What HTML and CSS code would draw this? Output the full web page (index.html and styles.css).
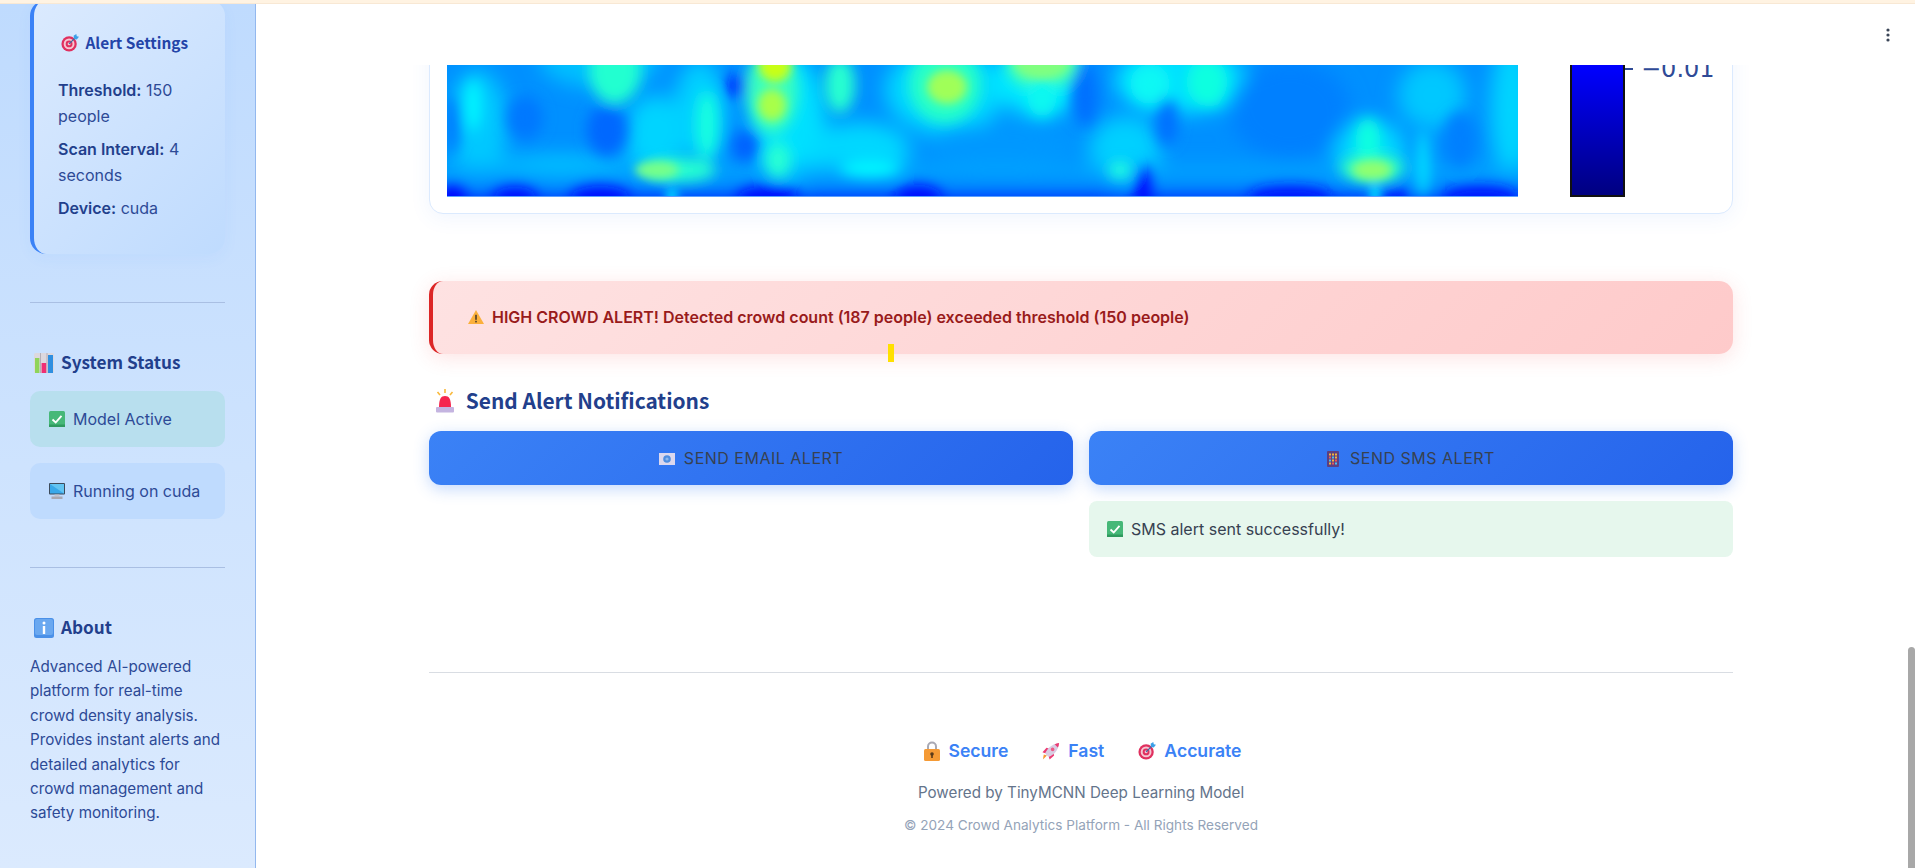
FILE: index.html
```html
<!DOCTYPE html>
<html lang="en">
<head>
  <meta charset="UTF-8" />
  <title>Crowd Analytics Platform</title>
  <link rel="stylesheet" href="styles.css">
</head>
<body>
  <svg class="defs" width="0" height="0">
    <defs>
      <symbol id="i-target" viewBox="0 0 20 20">
        <circle cx="9" cy="11" r="8.5" fill="#e0305f"/>
        <circle cx="9" cy="11" r="6" fill="#f6c6d2"/>
        <circle cx="9" cy="11" r="3.8" fill="#e0305f"/>
        <circle cx="9" cy="11" r="1.6" fill="#f6c6d2"/>
        <path d="M9 11 L16 4" stroke="#3a6ea5" stroke-width="1.4"/>
        <path d="M14 2 L17 0 L17.5 2.5 L20 3 L17.5 6 L14.5 5.5 Z" fill="#3aa0e8"/>
      </symbol>
      <symbol id="i-chart" viewBox="0 0 20 20">
        <rect x="0" y="0" width="20" height="20" rx="1.5" fill="#dcd8de"/>
        <path d="M6.5 0V20M13 0V20" stroke="#aaa5ae" stroke-width=".8"/>
        <rect x="1" y="5" width="4.4" height="15" fill="#8fd45a"/>
        <rect x="7.6" y="10" width="4.6" height="10" fill="#ef2f74"/>
        <rect x="14" y="2" width="5" height="18" fill="#2f8fe0"/>
      </symbol>
      <symbol id="i-check" viewBox="0 0 16 16">
        <rect x="0" y="0" width="16" height="16" rx="1.5" fill="#46b878"/>
        <rect x="0" y="13.5" width="16" height="2.5" fill="#2f9a5e"/>
        <path d="M3.5 8.5 L6.7 11.5 L12.5 4.8" fill="none" stroke="#fff" stroke-width="1.9"/>
      </symbol>
      <symbol id="i-monitor" viewBox="0 0 16 16">
        <rect x="0" y="0" width="16" height="11.5" rx="1" fill="#3c4a5a"/>
        <path d="M1 1H15V10.5H1Z" fill="#38a8ea"/>
        <path d="M1 1H15V10.5Z" fill="#62c4f2"/>
        <rect x="5.5" y="11.5" width="5" height="2" fill="#c4c4cc"/>
        <rect x="2.5" y="13.5" width="11" height="2.5" fill="#a8a8b2"/>
      </symbol>
      <symbol id="i-info" viewBox="0 0 20 20">
        <rect x="0" y="0" width="20" height="20" rx="2.5" fill="#4a90e8"/>
        <rect x="1" y="1" width="18" height="16" rx="2" fill="#6aa8f0"/>
        <circle cx="10" cy="5" r="1.5" fill="#fff"/>
        <rect x="8.8" y="8" width="2.4" height="8" fill="#fff"/>
      </symbol>
      <symbol id="i-warn" viewBox="0 0 16 14">
        <path d="M8 0 L16 14 H0 Z" fill="#fbb03b"/>
        <rect x="7.2" y="4.8" width="1.6" height="5" fill="#4a3a2a"/>
        <rect x="7.2" y="10.8" width="1.6" height="1.6" fill="#4a3a2a"/>
      </symbol>
      <symbol id="i-siren" viewBox="0 0 20 24">
        <path d="M4 18 C4 10 6 7 10 7 C14 7 16 10 16 18 Z" fill="#f5264f"/>
        <rect x="1" y="18" width="18" height="5.5" rx="1" fill="#c4b4e0"/>
        <path d="M10 0V4M2.5 3 L5 6M17.5 3 L15 6" stroke="#f9b93c" stroke-width="1.6"/>
      </symbol>
      <symbol id="i-mail" viewBox="0 0 16 12">
        <rect x="0" y="0" width="16" height="12" fill="#dcd8ee"/>
        <circle cx="8" cy="6" r="3.8" fill="#4f8ee0"/>
        <circle cx="8" cy="6" r="1.6" fill="#8db8ee"/>
      </symbol>
      <symbol id="i-phone" viewBox="0 0 12 16">
        <rect x="0" y="0" width="12" height="16" rx="1" fill="#5c3f80"/>
        <rect x="2" y="2.5" width="2" height="2" fill="#f2b63c"/>
        <rect x="5" y="2.5" width="2" height="2" fill="#f2b63c"/>
        <rect x="8" y="2.5" width="2" height="2" fill="#f2b63c"/>
        <rect x="2" y="5.5" width="2" height="2" fill="#e85a5a"/>
        <rect x="5" y="5.5" width="2" height="2" fill="#4fc0e8"/>
        <rect x="8" y="5.5" width="2" height="2" fill="#f2b63c"/>
        <rect x="2" y="8.5" width="2" height="2" fill="#4fc0e8"/>
        <rect x="5" y="8.5" width="2" height="2" fill="#f2b63c"/>
        <rect x="8" y="8.5" width="2" height="2" fill="#e85a5a"/>
        <rect x="2" y="11.5" width="2" height="2" fill="#f2b63c"/>
        <rect x="5" y="11.5" width="2" height="2" fill="#e85a5a"/>
        <rect x="8" y="11.5" width="2" height="2" fill="#4fc0e8"/>
      </symbol>
      <symbol id="i-lock" viewBox="0 0 16 20">
        <path d="M4 9V5.5a4 4 0 0 1 8 0V9" fill="none" stroke="#a9a9b4" stroke-width="2"/>
        <rect x="0" y="8" width="16" height="12" rx="1.5" fill="#f59a35"/>
        <circle cx="8" cy="13" r="1.8" fill="#5a3a1a"/>
        <rect x="7.2" y="13" width="1.6" height="4" fill="#5a3a1a"/>
      </symbol>
      <symbol id="i-rocket" viewBox="0 0 20 20">
        <path d="M5.5 15 L1 19.5 L2 14 Z" fill="#f59a35"/>
        <path d="M3.5 12.5 L0.5 11.5 L5 6.5 L9 7.5 Z" fill="#ec3a72"/>
        <path d="M7.5 16.5 L8.5 19.5 L13.5 15 L12.5 11 Z" fill="#ec3a72"/>
        <path d="M3.5 13 C5.5 7 11 2 19 1 C18.5 9 13 14.5 7 16.5 Z" fill="#d9cce2"/>
        <path d="M14 2.6 C15.5 1.8 17 1.2 19 1 C18.9 3 18.4 4.6 17.6 6 Z" fill="#ec3a72"/>
        <circle cx="11.8" cy="8.2" r="2" fill="#ec5a86"/>
      </symbol>
      <filter id="wide" x="-5%" y="-30%" width="110%" height="160%">
        <feGaussianBlur stdDeviation="10"/>
      </filter>
      <filter id="mid" x="-5%" y="-30%" width="110%" height="160%">
        <feGaussianBlur stdDeviation="7"/>
      </filter>
      <filter id="tight" x="-5%" y="-30%" width="110%" height="160%">
        <feGaussianBlur stdDeviation="5"/>
      </filter>
    </defs>
  </svg>

  <div class="strip"></div>

  <div class="app">
    <aside class="sidebar">
      <div class="settings">
        <h4><svg class="ico ico-18"><use href="#i-target"/></svg> Alert Settings</h4>
        <p><strong>Threshold:</strong> 150 people</p>
        <p><strong>Scan Interval:</strong> 4 seconds</p>
        <p><strong>Device:</strong> cuda</p>
      </div>

      <hr class="rule rule-first">

      <h3 class="side-title"><svg class="ico ico-20"><use href="#i-chart"/></svg> System Status</h3>
      <div class="status status-ok"><svg class="ico ico-16"><use href="#i-check"/></svg> Model Active</div>
      <div class="status status-info"><svg class="ico ico-16"><use href="#i-monitor"/></svg> Running on cuda</div>

      <hr class="rule rule-second">

      <h3 class="side-title about-title"><svg class="ico ico-20"><use href="#i-info"/></svg> About</h3>
      <p class="about">Advanced AI-powered platform for real-time crowd density analysis. Provides instant alerts and detailed analytics for crowd management and safety monitoring.</p>
    </aside>

    <main class="main">
      <div class="topbar">
        <svg class="dots" width="4" height="14" viewBox="0 0 4 14">
          <circle cx="2" cy="2" r="1.6"/><circle cx="2" cy="7" r="1.6"/><circle cx="2" cy="12" r="1.6"/>
        </svg>
      </div>

      <div class="content">
        <section class="plot-card">
          <div class="plot">
            <svg class="heatmap" width="1071" height="132" viewBox="447 65 1071 132">
              <rect x="447" y="65" width="1071" height="132" fill="#0090ff"/>
              <!-- broad cyan ground and the bottom band -->
              <g filter="url(#wide)">
                <ellipse cx="478" cy="125" rx="30" ry="55" fill="#00c8ff"/>
                <ellipse cx="560" cy="168" rx="70" ry="12" fill="#00d4ff"/>
                <ellipse cx="600" cy="60" rx="60" ry="28" fill="#00c0ff"/>
                <ellipse cx="655" cy="135" rx="30" ry="40" fill="#00d4ff"/>
                <ellipse cx="700" cy="110" rx="26" ry="50" fill="#00d0ff"/>
                <ellipse cx="790" cy="120" rx="36" ry="65" fill="#00e0ff"/>
                <ellipse cx="860" cy="150" rx="50" ry="28" fill="#00d8ff"/>
                <ellipse cx="945" cy="90" rx="60" ry="44" fill="#00d8ff"/>
                <ellipse cx="1040" cy="80" rx="46" ry="36" fill="#00e8ff"/>
                <ellipse cx="1125" cy="150" rx="36" ry="34" fill="#00d0ff"/>
                <ellipse cx="1180" cy="80" rx="66" ry="34" fill="#00e0ff"/>
                <ellipse cx="1432" cy="95" rx="34" ry="34" fill="#00c8ff"/>
                <ellipse cx="1512" cy="110" rx="22" ry="70" fill="#00d4ff"/>
                <ellipse cx="1370" cy="150" rx="36" ry="30" fill="#00d8ff"/>
                <ellipse cx="1000" cy="145" rx="80" ry="22" fill="#0098ff"/>
                <ellipse cx="1290" cy="110" rx="60" ry="50" fill="#0080ff"/>
                <rect x="420" y="166" width="1130" height="12" fill="#00a8ff"/>
                <rect x="420" y="192" width="1130" height="40" fill="#0030ff"/>
              </g>
              <!-- darker pockets and green ridges -->
              <g filter="url(#mid)">
                <ellipse cx="525" cy="118" rx="18" ry="22" fill="#0078ff"/>
                <ellipse cx="607" cy="130" rx="20" ry="26" fill="#0068ff"/>
                <ellipse cx="452" cy="125" rx="8" ry="30" fill="#0078ff"/>
                <ellipse cx="1085" cy="92" rx="14" ry="34" fill="#0070ff"/>
                <ellipse cx="1167" cy="122" rx="11" ry="24" fill="#0070ff"/>
                <ellipse cx="1460" cy="140" rx="16" ry="28" fill="#0080ff"/>
                <ellipse cx="738" cy="86" rx="10" ry="12" fill="#0010ff"/>
                <ellipse cx="745" cy="146" rx="13" ry="16" fill="#0060ff"/>
                <ellipse cx="452" cy="198" rx="14" ry="12" fill="#0000ff"/>
                <ellipse cx="515" cy="198" rx="22" ry="11" fill="#0010ff"/>
                <ellipse cx="600" cy="198" rx="30" ry="12" fill="#0010ff"/>
                <ellipse cx="768" cy="198" rx="32" ry="12" fill="#0008ff"/>
                <ellipse cx="918" cy="198" rx="24" ry="13" fill="#0010ff"/>
                <ellipse cx="1143" cy="190" rx="8" ry="24" fill="#0000ff"/>
                <ellipse cx="1290" cy="198" rx="42" ry="12" fill="#0018ff"/>
                <ellipse cx="1395" cy="198" rx="14" ry="10" fill="#0020ff"/>
                <ellipse cx="1480" cy="198" rx="38" ry="12" fill="#0018ff"/>
                <ellipse cx="615" cy="70" rx="26" ry="34" fill="#20ffd0"/>
                <ellipse cx="707" cy="125" rx="11" ry="34" fill="#18ffe0"/>
                <ellipse cx="772" cy="90" rx="26" ry="44" fill="#38ffc0"/>
                <ellipse cx="778" cy="160" rx="13" ry="18" fill="#28ffd4"/>
                <ellipse cx="473" cy="105" rx="8" ry="26" fill="#00f8ff"/>
                <ellipse cx="840" cy="85" rx="15" ry="28" fill="#28ffd0"/>
                <ellipse cx="945" cy="85" rx="36" ry="38" fill="#28ffc8"/>
                <ellipse cx="1042" cy="64" rx="36" ry="26" fill="#40ffb8"/>
                <ellipse cx="1042" cy="95" rx="15" ry="22" fill="#08f8f0"/>
                <ellipse cx="1207" cy="82" rx="20" ry="24" fill="#10ffe0"/>
                <ellipse cx="1150" cy="84" rx="20" ry="20" fill="#08f8f4"/>
                <ellipse cx="1120" cy="170" rx="12" ry="9" fill="#20ffe0"/>
                <ellipse cx="870" cy="168" rx="30" ry="9" fill="#00f8ff"/>
                <ellipse cx="680" cy="170" rx="36" ry="12" fill="#28ffd0"/>
                <ellipse cx="1372" cy="168" rx="32" ry="14" fill="#30ffc0"/>
                <ellipse cx="1368" cy="140" rx="12" ry="22" fill="#10ffe0"/>
                <ellipse cx="1423" cy="165" rx="6" ry="36" fill="#00e8ff"/>
                <ellipse cx="1215" cy="88" rx="8" ry="18" fill="#10ffe0"/>
              </g>
              <!-- hot spots -->
              <g filter="url(#tight)">
                <ellipse cx="657" cy="170" rx="22" ry="9" fill="#78ff88"/>
                <ellipse cx="775" cy="66" rx="16" ry="16" fill="#c8ff18"/>
                <ellipse cx="772" cy="105" rx="14" ry="16" fill="#a8ff48"/>
                <ellipse cx="947" cy="87" rx="20" ry="17" fill="#a0ff58"/>
                <ellipse cx="1042" cy="62" rx="28" ry="18" fill="#80ff80"/>
                <ellipse cx="1372" cy="170" rx="20" ry="10" fill="#90ff70"/>
                <ellipse cx="1375" cy="195" rx="5" ry="12" fill="#00e0ff"/>
                <ellipse cx="672" cy="197" rx="6" ry="10" fill="#00d8ff"/>
              </g>
              <rect x="447" y="196" width="1071" height="1" fill="#5aa0ff"/>
            </svg>

            <div class="colorbar"></div>
            <div class="tick-row">
              <span class="tick"></span>
              <span class="tick-label">−0.01</span>
            </div>
          </div>
        </section>

        <div class="alert">
          <svg class="ico ico-warn"><use href="#i-warn"/></svg>
          <span>HIGH CROWD ALERT! Detected crowd count (187 people) exceeded threshold (150 people)</span>
          <span class="caret"></span>
        </div>

        <h2 class="notify-title"><svg class="ico ico-siren"><use href="#i-siren"/></svg> Send Alert Notifications</h2>

        <div class="actions">
          <div class="action">
            <button class="send"><svg class="ico ico-mail"><use href="#i-mail"/></svg> SEND EMAIL ALERT</button>
          </div>
          <div class="action">
            <button class="send"><svg class="ico ico-phone"><use href="#i-phone"/></svg> SEND SMS ALERT</button>
            <div class="sent"><svg class="ico ico-16"><use href="#i-check"/></svg> SMS alert sent successfully!</div>
          </div>
        </div>

        <hr class="foot-rule">

        <footer class="footer">
          <div class="badges">
            <span class="badge"><svg class="ico ico-lock"><use href="#i-lock"/></svg> Secure</span>
            <span class="badge"><svg class="ico ico-18"><use href="#i-rocket"/></svg> Fast</span>
            <span class="badge"><svg class="ico ico-18"><use href="#i-target"/></svg> Accurate</span>
          </div>
          <p class="powered">Powered by TinyMCNN Deep Learning Model</p>
          <p class="copyright">© 2024 Crowd Analytics Platform - All Rights Reserved</p>
        </footer>
      </div>

      <div class="scrollbar"><div class="thumb"></div></div>
    </main>
  </div>
</body>
</html>
```

FILE: styles.css
```css
* {
  box-sizing: border-box;
}

html,
body {
  margin: 0;
  height: 868px;
  overflow: hidden;
}

body {
  font-family: Inter, "Liberation Sans", sans-serif;
  background: #fff;
  color: #374151;
}

.defs {
  position: absolute;
}

.strip {
  height: 4px;
  background: #fff3e2;
  border-bottom: 1px solid #f8e8d4;
  position: relative;
  z-index: 3;
}

.app {
  display: flex;
  height: 864px;
}

.ico {
  display: inline-block;
  flex: none;
  vertical-align: -3px;
}

.ico-16 { width: 16px; height: 16px; }
.ico-18 { width: 18px; height: 18px; }
.ico-20 { width: 20px; height: 20px; }
.ico-warn { width: 16px; height: 14px; }
.ico-siren { width: 20px; height: 24px; }
.ico-mail { width: 16px; height: 12px; vertical-align: -1px; }
.ico-phone { width: 12px; height: 16px; }
.ico-lock { width: 16px; height: 20px; }

/* Sidebar */
.sidebar {
  width: 256px;
  flex: none;
  padding: 0 30px;
  background: linear-gradient(180deg, #bfdbfe, #dbeafe);
  border-right: 1px solid #93b8ee;
  color: #1e3a8a;
}

.settings {
  margin-top: -4px;
  height: 254px;
  padding: 29px 20px 0 24px;
  border-left: 4px solid #3b82f6;
  border-radius: 16px;
  background: linear-gradient(135deg, #dbeafe, #bfdbfe);
  box-shadow: 0 4px 15px rgba(59, 130, 246, 0.05);
  font-size: 16px;
}

.settings h4 {
  margin: 0 0 22px 3px;
  font: 600 15.4px/26px "Noto Sans CJK SC", "Noto Sans", sans-serif;
  color: #2444a8;
}

.settings h4 .ico {
  margin-right: 3px;
}

.settings p {
  margin: 0 0 7px;
  line-height: 26px;
  color: #2d4a96;
}

.settings strong {
  font-weight: 600;
  color: #223f8c;
}

.rule {
  margin: 0;
  border: 0;
  border-top: 1px solid #a9bfe3;
}

.rule-first { margin-top: 48px; }
.rule-second { margin-top: 48px; }

.side-title {
  margin: 45px 0 15px 4px;
  font: 600 17.2px/28px "Noto Sans CJK SC", "Noto Sans", sans-serif;
  color: #223f8c;
}

.side-title .ico {
  margin-right: 3px;
  vertical-align: -4px;
}

.status {
  height: 56px;
  margin-bottom: 16px;
  padding: 0 19px;
  display: flex;
  align-items: center;
  gap: 8px;
  border-radius: 10px;
  font-size: 16px;
  color: #2d4a96;
}

.status-ok { background: #b8dfee; }
.status-info { background: #bfdbfe; margin-bottom: 0; }

.about-title {
  margin-top: 45px;
  margin-bottom: 14px;
}

.about {
  margin: 0;
  font-size: 15.2px;
  line-height: 24.4px;
  color: #2d4a96;
}

/* Main area */
.main {
  flex: 1;
  position: relative;
  display: flex;
  min-width: 0;
  overflow: hidden;
}

.topbar {
  position: absolute;
  top: 0;
  left: 0;
  right: 0;
  height: 61px;
  background: #fff;
  z-index: 2;
}

.dots {
  position: absolute;
  top: 24px;
  right: 25px;
  fill: #3b4657;
}

.content {
  flex: 1;
  min-width: 0;
  padding: 26px 175px 0 173px;
}

.scrollbar {
  width: 7px;
  flex: none;
  display: flex;
  flex-direction: column;
  justify-content: flex-end;
}

.thumb {
  height: 221px;
  background: #a8a8a8;
  border-radius: 4px 4px 0 0;
}

.plot-card {
  height: 184px;
  padding: 19px 17px 0;
  background: #fff;
  border: 1px solid #dbeafe;
  border-radius: 14px;
  box-shadow: 0 4px 20px rgba(59, 130, 246, 0.08);
}

.plot {
  display: flex;
  align-items: flex-end;
  height: 147px;
}

.heatmap {
  display: block;
  flex: none;
}

.colorbar {
  width: 55px;
  height: 147px;
  margin-left: 52px;
  flex: none;
  border: 2px solid #111;
  background: linear-gradient(180deg, #0000ff 10%, #000080);
}

.tick-row {
  align-self: flex-start;
  display: flex;
  align-items: center;
  height: 34px;
  margin-top: 2px;
}

.tick {
  width: 8px;
  height: 2px;
  margin-right: 8px;
  background: #2f4a96;
}

.tick-label {
  font: 24px/34px "DejaVu Sans", sans-serif;
  color: #2f4a96;
}

.alert {
  position: relative;
  height: 73px;
  margin-top: 67px;
  padding-left: 35px;
  padding-bottom: 1px;
  display: flex;
  align-items: center;
  gap: 8px;
  border-left: 4px solid #dc2626;
  border-radius: 14px;
  background: linear-gradient(135deg, #fee2e2, #fecaca);
  box-shadow: 0 4px 20px rgba(239, 68, 68, 0.15);
  font-size: 16px;
  font-weight: 600;
  color: #991b1b;
}

.caret {
  position: absolute;
  left: 455px;
  top: 63px;
  width: 6px;
  height: 18px;
  background: #ffe000;
}

.notify-title {
  margin: 30px 0 15px 6px;
  font: 600 20.9px/32px "Noto Sans CJK SC", "Noto Sans", sans-serif;
  color: #223f8c;
}

.notify-title .ico {
  margin-right: 6px;
  vertical-align: -4px;
}

.actions {
  display: flex;
  gap: 16px;
  align-items: flex-start;
  height: 241px;
}

.action {
  flex: 1;
  min-width: 0;
}

.send {
  display: block;
  width: 100%;
  height: 54px;
  padding-bottom: 2px;
  border: 0;
  border-radius: 12px;
  background: linear-gradient(135deg, #3b82f6, #2563eb);
  box-shadow: 0 4px 15px rgba(59, 130, 246, 0.3);
  font: 400 16px Inter, sans-serif;
  letter-spacing: 0.5px;
  color: #374151;
}

.send .ico {
  margin-right: 4px;
}

.send .ico-phone {
  margin-right: 6px;
}

.sent {
  height: 56px;
  margin-top: 16px;
  padding: 0 18px;
  display: flex;
  align-items: center;
  gap: 8px;
  border-radius: 8px;
  background: #e6f7ed;
  font-size: 16px;
  color: #374151;
}

.foot-rule {
  margin: 0;
  border: 0;
  border-top: 1px solid #d9dde3;
}

.footer {
  text-align: center;
}

.badges {
  margin-top: 64px;
  margin-left: 4px;
  display: flex;
  justify-content: center;
  gap: 34px;
  font-size: 17.6px;
  font-weight: 600;
  line-height: 28px;
  color: #3b82f6;
}

.badge {
  display: flex;
  align-items: center;
  gap: 8px;
}

.powered {
  margin: 16px 0 0;
  font-size: 15.2px;
  line-height: 24px;
  color: #64748b;
}

.copyright {
  margin: 10px 0 0;
  font-size: 13.6px;
  line-height: 20px;
  color: #94a3b8;
}
```
